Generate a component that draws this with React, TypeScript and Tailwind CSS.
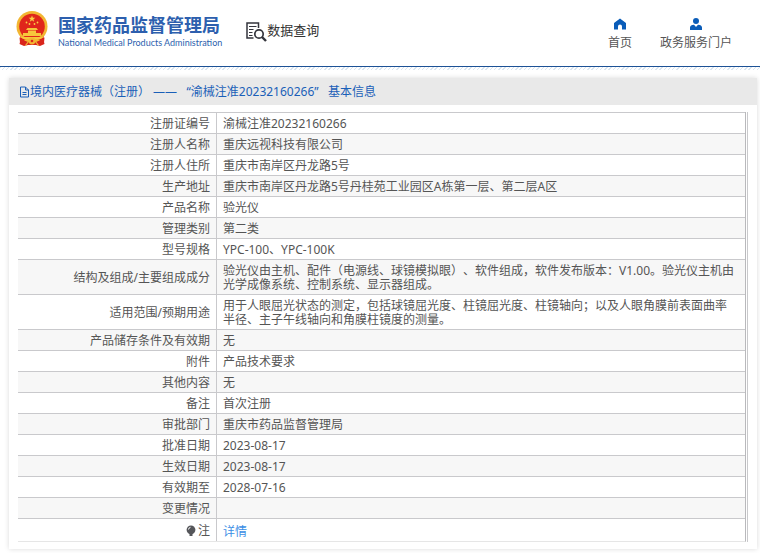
import type { ReactNode } from "react";

type Field = { label: ReactNode; value: ReactNode };

const fields: Field[] = [
	{ label: "注册证编号", value: "渝械注准20232160266" },
	{ label: "注册人名称", value: "重庆远视科技有限公司" },
	{ label: "注册人住所", value: "重庆市南岸区丹龙路5号" },
	{ label: "生产地址", value: "重庆市南岸区丹龙路5号丹桂苑工业园区A栋第一层、第二层A区" },
	{ label: "产品名称", value: "验光仪" },
	{ label: "管理类别", value: "第二类" },
	{ label: "型号规格", value: "YPC-100、YPC-100K" },
	{
		label: "结构及组成/主要组成成分",
		value: "验光仪由主机、配件（电源线、球镜模拟眼）、软件组成，软件发布版本：V1.00。验光仪主机由光学成像系统、控制系统、显示器组成。",
	},
	{
		label: "适用范围/预期用途",
		value: "用于人眼屈光状态的测定，包括球镜屈光度、柱镜屈光度、柱镜轴向；以及人眼角膜前表面曲率半径、主子午线轴向和角膜柱镜度的测量。",
	},
	{ label: "产品储存条件及有效期", value: "无" },
	{ label: "附件", value: "产品技术要求" },
	{ label: "其他内容", value: "无" },
	{ label: "备注", value: "首次注册" },
	{ label: "审批部门", value: "重庆市药品监督管理局" },
	{ label: "批准日期", value: "2023-08-17" },
	{ label: "生效日期", value: "2023-08-17" },
	{ label: "有效期至", value: "2028-07-16" },
	{ label: "变更情况", value: "" },
];

function Emblem() {
	return (
		<svg viewBox="0 0 34 36" className="h-9 w-[34px] shrink-0" aria-hidden="true">
			<path d="M5 22h24l-.5 7 1 4-4.500 2-4-1h-8l-4 1-4.500-2 1-4z" fill="#d9251c" />
			<circle cx="17" cy="15.500" r="15.500" fill="#f2b632" />
			<circle cx="17" cy="15.500" r="12.800" fill="#e0261b" />
			<path d="m17 4.500.9 2.300h2.500l-2 1.500.8 2.400-2.200-1.400-2.200 1.400.8-2.400-2-1.500h2.500z" fill="#f9cf45" />
			<circle cx="11.500" cy="11.500" r=".9" fill="#f9cf45" />
			<circle cx="14.500" cy="13" r=".9" fill="#f9cf45" />
			<circle cx="19.500" cy="13" r=".9" fill="#f9cf45" />
			<circle cx="22.500" cy="11.500" r=".9" fill="#f9cf45" />
			<path d="M12.500 17h9l1.500 2H11zM13 19.500h8V22h-8zM8 22h18v3H8zM6 26h22l-1.500 2h-19z" fill="#f7c63c" />
			<path d="M4.500 26.500 11 29l-2 3.500-4-1zM29.500 26.500 23 29l2 3.500 4-1z" fill="#d9251c" />
			<circle cx="17" cy="30" r="3.400" fill="#f2b632" />
			<circle cx="17" cy="30" r="1.300" fill="#e0261b" />
			<path d="M9.500 29l4 1.500-3 4M24.500 29l-4 1.500 3 4" fill="none" stroke="#f2b632" strokeWidth="1.200" />
		</svg>
	);
}

function QueryIcon() {
	return (
		<svg viewBox="0 0 21 20" className="h-5 w-[21px] shrink-0" fill="none" stroke="#33343c" aria-hidden="true">
			<path d="M7.500 16H1V1h11.500v5" strokeWidth="1.500" />
			<path d="M3 4.500h7.500M3 7.500h4.500M3 10.500h3.500M3 13.500h3.500" strokeWidth="1.200" />
			<circle cx="13" cy="12" r="4.200" strokeWidth="1.700" />
			<path d="m16 15 4 4" strokeWidth="2.400" />
		</svg>
	);
}

function HomeIcon() {
	return (
		<svg viewBox="0 0 12 12" className="size-3" fill="#0a5cb8" aria-hidden="true">
			<path d="M6 .5 0 5v1.500V11.500h4V8.500a2 2 0 0 1 4 0v3h4V5z" />
		</svg>
	);
}

function UserIcon() {
	return (
		<svg viewBox="0 0 12 12" className="size-3" fill="#0a5cb8" aria-hidden="true">
			<circle cx="6" cy="3" r="3" />
			<path d="M0 12V9.500C0 8 1.500 7 4 6.800L6 9l2-2.200c2.500.200 4 1.200 4 2.700V12z" />
		</svg>
	);
}

function FileIcon() {
	return (
		<svg viewBox="0 0 11 12" className="h-3 w-[11px]" fill="none" stroke="#1a5fb8" aria-hidden="true">
			<path d="M1.500 1h5l3 3v7h-8zM6.500 1v3h3M3.500 6.500h4M3.500 8.500h4" />
		</svg>
	);
}

function BulbIcon() {
	return (
		<svg viewBox="0 0 10 12" className="h-3 w-2.5" aria-hidden="true">
			<circle cx="5" cy="4.800" r="4.400" fill="#55565a" />
			<path d="M3.500 9h3v2h-3z" fill="#55565a" />
			<path d="M2.500 4.500A2.500 2.500 0 0 1 4.500 2.300" fill="none" stroke="#fff" />
		</svg>
	);
}

function Row({ label, value }: Field) {
	return (
		<tr className="odd:bg-white even:bg-[#f7f7f7] first:bg-[#f9fbfe]">
			<th scope="row" className="border-t border-r border-[#c9c9cc] pt-1 pr-1.5 pb-0.5 text-right font-normal">
				{label}
			</th>
			<td className="border-t border-[#c9c9cc] pt-1 pr-2 pb-0.5 pl-1.5">{value}</td>
		</tr>
	);
}

export default function App() {
	return (
		<div
			lang="zh-CN"
			className="bg-white font-['Noto_Sans','Noto_Sans_CJK_SC',sans-serif] text-xs leading-[14px] text-[#555] [text-spacing-trim:space-all]"
		>
			<header className="flex h-[67px] items-start justify-between border-b border-[#1d5296] pr-7 pl-[15px]">
				<div className="flex">
					<a href="#" className="flex pt-[11px]">
						<Emblem />
						<span className="ml-[9px] flex flex-col pt-0.5 text-[#2d5fae]">
							<span className="text-lg leading-6 font-bold">国家药品监督管理局</span>
							<span className="font-['Lato',sans-serif] text-[9px] leading-3 whitespace-nowrap">
								National Medical Products Administration
							</span>
						</span>
					</a>
					<a href="#" className="ml-6 flex pt-[22px] text-[13px] leading-4 text-[#333]">
						<QueryIcon />
						数据查询
					</a>
				</div>
				<nav className="flex gap-7 pt-[18px]">
					<a href="#" className="flex flex-col items-center gap-[5px]">
						<HomeIcon />
						<span className="leading-4">首页</span>
					</a>
					<a href="#" className="flex flex-col items-center gap-[5px]">
						<UserIcon />
						<span className="leading-4">政务服务门户</span>
					</a>
				</nav>
			</header>
			<div className="h-[3px] bg-[repeating-linear-gradient(135deg,#dbe6f0_0px,#dbe6f0_1px,#fff_1px,#fff_3px)]" />

			<main className="pt-2 pr-[3px] pb-1 pl-[9px]">
				<section className="bg-white pb-[7px] shadow-[0_0_5px_rgba(0,0,0,0.15)]">
					<h1 className="flex h-[27px] items-center bg-[#e9e9e9] pl-2.5 text-[#1a5fb8]">
						<FileIcon />
						境内医疗器械（注册） ——&nbsp;&nbsp; “渝械注准20232160266” &nbsp;&nbsp;基本信息
					</h1>
					<div className="mx-[9px] mt-[7px] border-r border-[#c9c9cc] pr-px">
						<table className="w-full table-fixed border-separate border-spacing-0 border-r border-b border-r-[#b9b9bc] border-b-[#e6e6e6]">
							<colgroup>
								<col className="w-[199px]" />
								<col />
							</colgroup>
							<tbody>
								{fields.map((field, i) => (
									<Row key={i} {...field} />
								))}
								<tr>
									<th scope="row" className="border-t border-r border-[#c9c9cc] pt-[5px] pr-1.5 pb-[3px] font-normal">
										<span className="flex items-center justify-end gap-0.5">
											<BulbIcon />注
										</span>
									</th>
									<td className="border-t border-[#c9c9cc] pt-1.5 pr-2 pb-0.5 pl-1.5">
										<a href="#" className="text-[#3b8ee5]">详情</a>
									</td>
								</tr>
							</tbody>
						</table>
					</div>
				</section>
			</main>
		</div>
	);
}
